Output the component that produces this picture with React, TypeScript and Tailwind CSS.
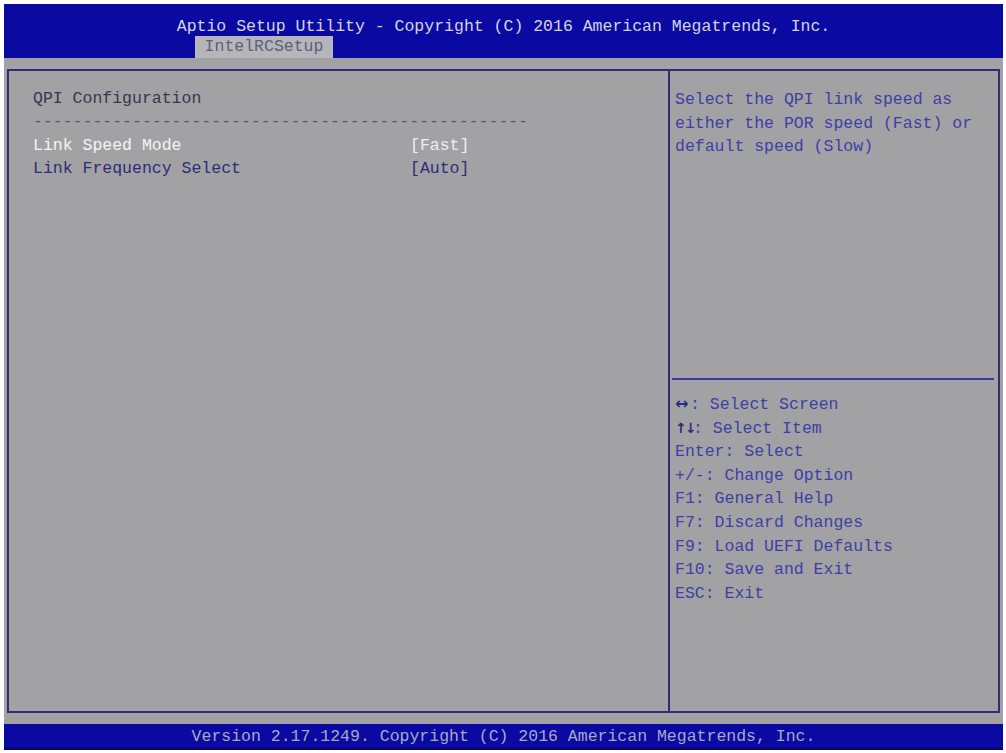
import React from 'react';

const mono = "font-['Liberation_Mono','DejaVu_Sans_Mono',monospace]";
const arrow = "inline-block font-['DejaVu_Sans',sans-serif] font-bold leading-none whitespace-nowrap";

const keys = [
  { glyph: '↔', rest: ': Select Screen', cls: 'w-[15px] text-[16px]' },
  { glyph: '↑↓', rest: ': Select Item', cls: 'w-[18px] text-[14px] tracking-[-2px]' },
  { glyph: '', rest: 'Enter: Select', cls: '' },
  { glyph: '', rest: '+/-: Change Option', cls: '' },
  { glyph: '', rest: 'F1: General Help', cls: '' },
  { glyph: '', rest: 'F7: Discard Changes', cls: '' },
  { glyph: '', rest: 'F9: Load UEFI Defaults', cls: '' },
  { glyph: '', rest: 'F10: Save and Exit', cls: '' },
  { glyph: '', rest: 'ESC: Exit', cls: '' },
];

export default function App() {
  return (
    <div className={`w-[1006px] h-[753px] bg-white pl-[4px] pr-[3px] pt-[4px] pb-[3px] flex flex-col ${mono} text-[16.5px]`}>
      {/* Title bar */}
      <div className="h-[54px] bg-[#0a0aa2] flex flex-col">
        <div className="pt-[14px] leading-[18px] text-center text-[#d4d4e6]">
          Aptio Setup Utility - Copyright (C) 2016 American Megatrends, Inc.
        </div>
        <div className="mt-auto ml-[191px] w-[138px] h-[22px] bg-[#b6b6ba] text-[#5a6278] leading-[22px] text-center">
          IntelRCSetup
        </div>
      </div>

      {/* Body */}
      <div className="flex-1 bg-[#a2a2a4] px-[3px] pt-[11px] pb-[11px]">
        <div className="h-full flex border-2 border-[#2e2e70]">
          {/* Left panel */}
          <div className="w-[661px] border-r-2 border-[#2e2e70] pl-[24px] pt-[16px] leading-[23.4px]">
            <div className="text-[#34384e]">QPI Configuration</div>
            <div className="text-[#585866] whitespace-nowrap">--------------------------------------------------</div>
            <div className="flex">
              <span className="w-[377px] text-[#f4f4f6]">Link Speed Mode</span>
              <span className="text-[#eeeef2]">[Fast]</span>
            </div>
            <div className="flex">
              <span className="w-[377px] text-[#2c2c7a]">Link Frequency Select</span>
              <span className="text-[#2c2c7a]">[Auto]</span>
            </div>
          </div>

          {/* Right panel */}
          <div className="flex-1 flex flex-col">
            <div className="h-[307px] pl-[5px] pt-[17px] leading-[23.5px] text-[#3e3ea6]">
              <div>Select the QPI link speed as</div>
              <div>either the POR speed (Fast) or</div>
              <div>default speed (Slow)</div>
            </div>
            <div className="ml-[2px] mr-[4px] h-[2px] bg-[#3838a0]" />
            <div className="pl-[5px] pt-[13px] leading-[23.6px] text-[#3e3ea6]">
              {keys.map((k) => (
                <div key={k.rest} className="h-[23.6px]">
                  {k.glyph && <span className={`${arrow} ${k.cls} text-[#2a2a80]`}>{k.glyph}</span>}
                  {k.rest}
                </div>
              ))}
            </div>
          </div>
        </div>
      </div>

      {/* Footer */}
      <div className="h-[26px] bg-[#0a0aa2] text-[#a8a8c6] text-center leading-[26px] border-b-2 border-[#05056a]">
        Version 2.17.1249. Copyright (C) 2016 American Megatrends, Inc.
      </div>
    </div>
  );
}
